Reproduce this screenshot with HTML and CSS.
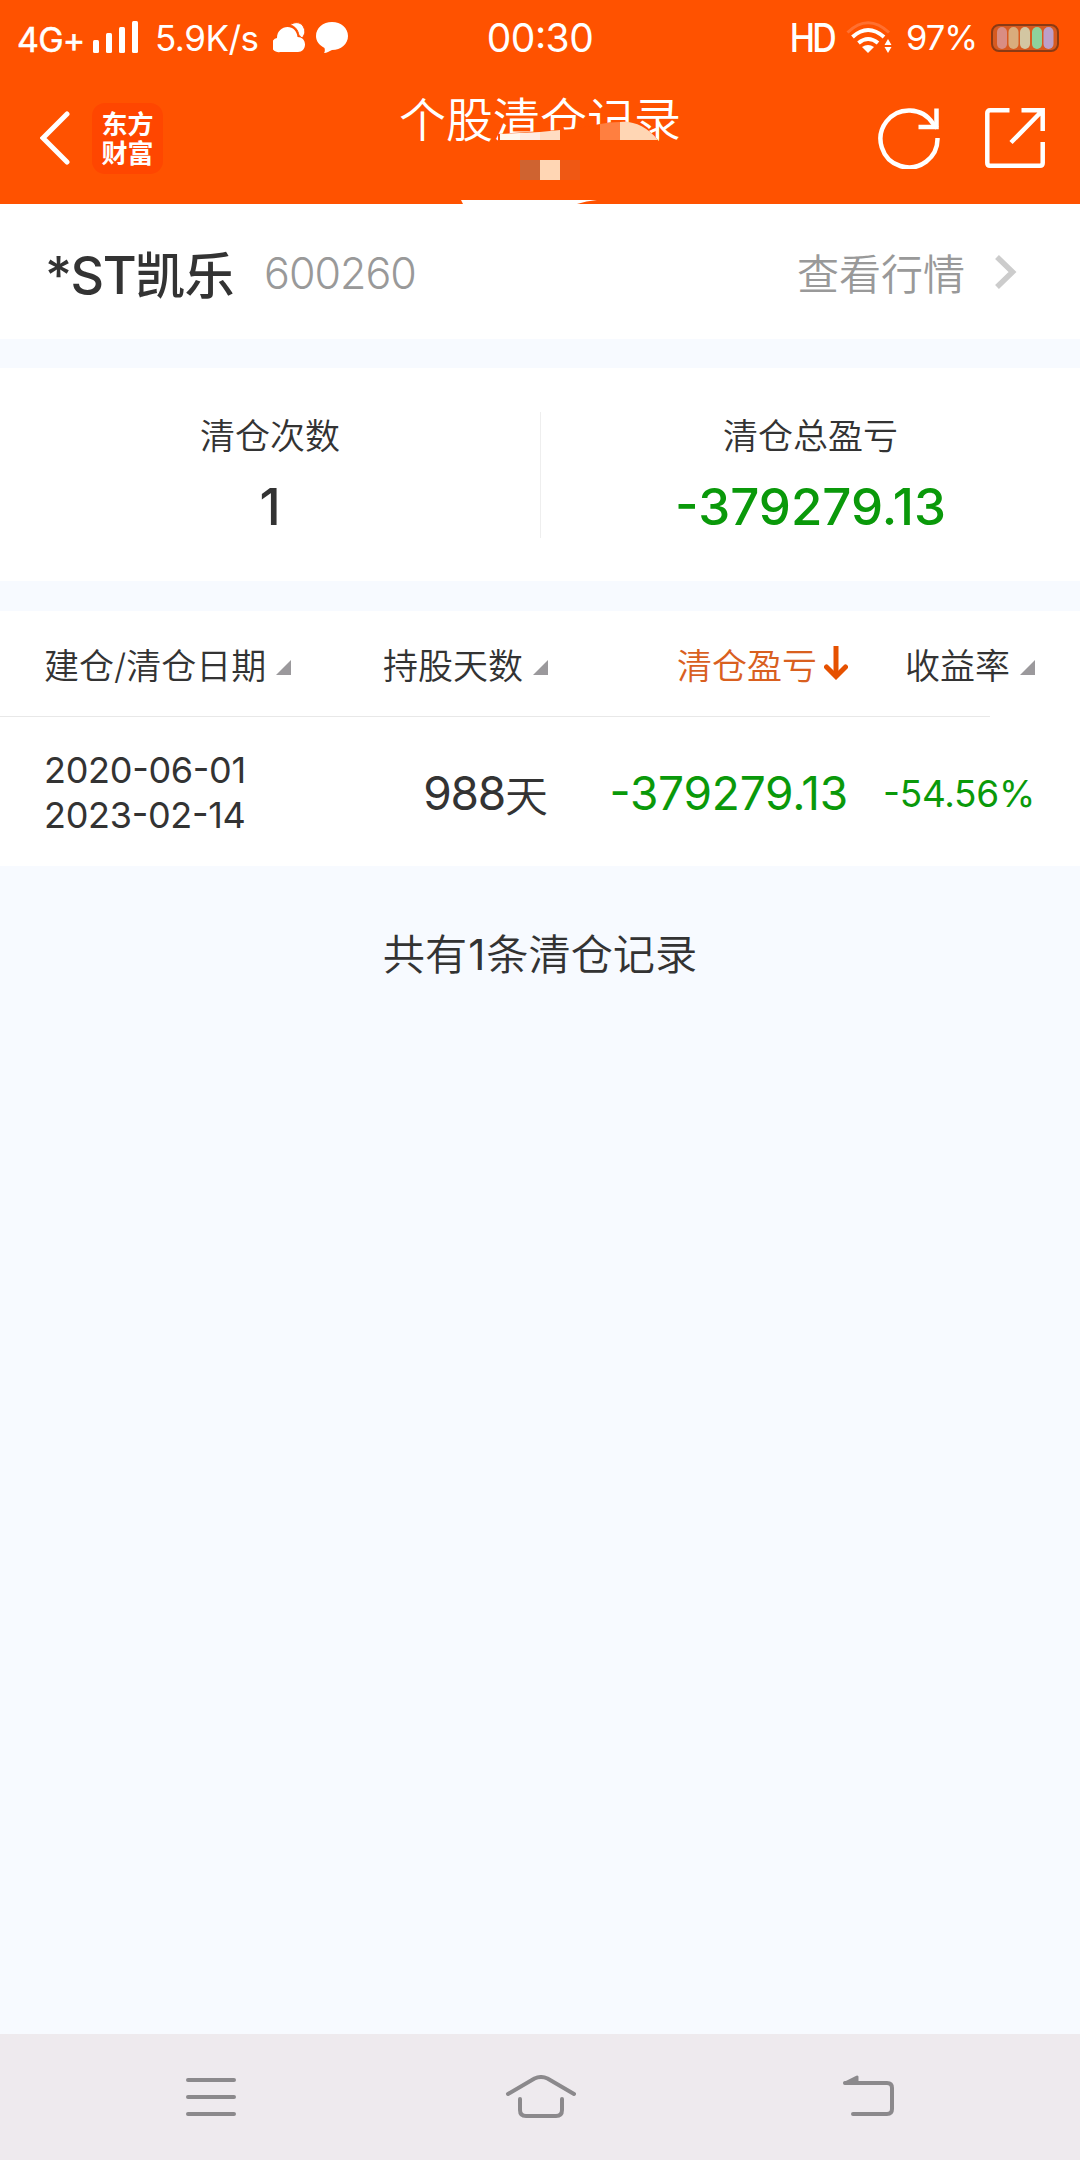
FILE: index.html
```html
<!DOCTYPE html>
<html lang="zh-CN">
    <head>
        <meta charset="utf-8">
        <title>个股清仓记录</title>
        <meta name="viewport" content="width=device-width, initial-scale=1">
        <link rel="stylesheet" href="styles.css">
    </head>
    <body>
        <header class="header">
            <div class="status-bar">
                <div class="status-left">
                    <span class="network">4G+</span>
                    <svg class="signal" width="46" height="34" viewBox="0 0 46 34" fill="#fff">
                        <rect x="0" y="19" width="6" height="13" rx="1.5"/>
                        <rect x="13" y="12" width="6" height="20" rx="1.5"/>
                        <rect x="26" y="6" width="6" height="26" rx="1.5"/>
                        <rect x="39" y="0" width="6" height="32" rx="1.5"/>
                    </svg>
                    <span class="speed">5.9K/s</span>
                    <svg class="cloud" width="32" height="31" viewBox="0 0 32 31" fill="#fff">
                        <path d="M7 30a7 7 0 0 1-3-14C4 9 9 5 14.500 5C20 5 24 9 24.500 15C29 15 32 18 32 22.500C32 27 29 30 25 30Z"/>
                        <path d="M17 3C22-1 29 0 31 6C33 10 31 14 29 16C28 14.500 27 14 26 13.500C25 8 22 4 17 3Z" stroke="#ff5200" stroke-width="1"/>
                    </svg>
                    <svg class="bubble" width="32" height="32" viewBox="0 0 32 32" fill="#fff">
                        <path d="M16 0C25 0 32 6 32 14S25 28 16 28C13 29 11 31 8 31C9 30 9 28 8.500 26C3 23 0 19 0 14C0 6 7 0 16 0Z"/>
                    </svg>
                </div>
                <div class="clock">00:30</div>
                <div class="status-right">
                    <span class="hd">HD</span>
                    <svg class="wifi" width="46" height="34" viewBox="0 0 46 34" fill="none" stroke="#fff" stroke-width="4">
                        <path d="M1.500 11.500Q22-8 43 11.500" stroke="#ff7030" stroke-width="3"/>
                        <path d="M6.500 16Q22 2 38 16"/>
                        <path d="M12.500 22Q22 14 32 22"/>
                        <path d="M16 26Q22 22 28 26L22 32Z" fill="#fff" stroke="none"/>
                        <path d="M42 18l3.500 6h-7zM42 32l3.500-6h-7z" fill="#fff" stroke="none"/>
                    </svg>
                    <span class="percent">97%</span>
                    <svg class="battery" width="68" height="28" viewBox="0 0 68 28">
                        <rect x="1" y="1" width="66" height="26" rx="7" fill="#d75a20" stroke="#8a3a14" stroke-width="2"/>
                        <rect x="6" y="3" width="10" height="22" rx="5" fill="#d98d83"/>
                        <rect x="17.500" y="3" width="10" height="22" rx="5" fill="#d9ac7c"/>
                        <rect x="29" y="3" width="10" height="22" rx="5" fill="#d3c6a2"/>
                        <rect x="41" y="3" width="10" height="22" rx="5" fill="#8ed19b"/>
                        <rect x="52.500" y="3" width="10" height="22" rx="5" fill="#bd9fc9"/>
                    </svg>
                </div>
            </div>
            <div class="title-bar">
                <div class="title-left">
                    <svg width="30" height="54" viewBox="0 0 30 54" fill="none" stroke="#fff" stroke-width="5" stroke-linecap="round">
                        <path d="M27 3L3 27L27 51"/>
                    </svg>
                    <div class="logo">东方<br>财富</div>
                </div>
                <h1 class="title">个股清仓记录</h1>
                <div class="title-right">
                    <svg width="62" height="62" viewBox="0 0 62 62" fill="none" stroke="#fff" stroke-width="4.500">
                        <path d="M59.500 31A28.500 28.500 0 1 1 55 16.500L59 21"/>
                        <path d="M58.500 1.500V20H40.500"/>
                    </svg>
                    <svg width="60" height="60" viewBox="0 0 60 60" fill="none" stroke="#fff" stroke-width="4.500">
                        <path d="M24.500 2.300H5Q2.300 2.300 2.300 5V55Q2.300 57.700 5 57.700H55Q57.700 57.700 57.700 55V34"/>
                        <path d="M36.500 2.300H57.700V23M57 3L26 34.500"/>
                    </svg>
                </div>
            </div>
            <svg class="smudge" width="360" height="84" viewBox="0 0 360 84">
                <path d="M138 14L214 9L240 4V24H138Z" fill="#ff5200"/>
                <path d="M240 4Q250 2 260 2Q281 0 298 20V24H240Z" fill="#ff5200"/>
                <path d="M140 14L160 13V20H140Z" fill="#fff8ee"/>
                <path d="M160 13L180 12V20H160Z" fill="#ffebe2"/>
                <path d="M180 12L200 10V20H180Z" fill="#ffdcc2"/>
                <path d="M240 4Q250 2 260 2V20H240Z" fill="#ff7f40"/>
                <path d="M260 2Q281 0 298 20H260Z" fill="#ffd6b4"/>
                <rect x="160" y="40" width="20" height="20" fill="#cf6330"/>
                <rect x="180" y="40" width="20" height="20" fill="#ffd6b4"/>
                <rect x="200" y="40" width="20" height="20" fill="#ef5814"/>
                <path d="M101 80H237Q226 81 217 84H103Z" fill="#fff"/>
            </svg>
        </header>

        <section class="stock">
            <span class="stock-name">*ST<b>凯乐</b></span>
            <span class="stock-code">600260</span>
            <span class="stock-link">查看行情</span>
            <svg width="22" height="34" viewBox="0 0 22 34" fill="none" stroke="#ccc" stroke-width="5.500">
                <path d="M2 2L17.500 17L2 32"/>
            </svg>
        </section>

        <section class="summary">
            <div class="summary-item">
                <div class="label">清仓次数</div>
                <div class="value">1</div>
            </div>
            <div class="summary-item">
                <div class="label">清仓总盈亏</div>
                <div class="value down">-379279.13</div>
            </div>
        </section>

        <section class="records">
            <div class="row head">
                <div class="cell first">建仓/清仓日期<i class="sort"></i></div>
                <div class="cell">持股天数<i class="sort"></i></div>
                <div class="cell active">清仓盈亏
                    <svg width="24" height="34" viewBox="0 0 24 34" fill="none" stroke="#e65100" stroke-width="5">
                        <path d="M12 0V30"/>
                        <path d="M2.500 21L12 30.500L21.500 21" stroke-linecap="round"/>
                    </svg>
                </div>
                <div class="cell">收益率<i class="sort"></i></div>
            </div>
            <div class="row body">
                <div class="cell first dates">2020-06-01<br>2023-02-14</div>
                <div class="cell days">988<span class="unit">天</span></div>
                <div class="cell profit down">-379279.13</div>
                <div class="cell rate down">-54.56%</div>
            </div>
        </section>

        <p class="total">共有<span class="count">1</span>条清仓记录</p>

        <nav class="nav-bar">
            <svg width="72" height="44" viewBox="0 0 72 44">
                <path d="M13 5H59M13 22H59M13 39H59"/>
            </svg>
            <svg width="72" height="44" viewBox="0 0 72 44">
                <path d="M4 19L30.500 3.500Q37 0.500 43.500 3.500L70 19M16 24V35Q16 41 22 41H52Q58 41 58 35V24"/>
            </svg>
            <svg width="72" height="44" viewBox="0 0 72 44">
                <path d="M12 8H54Q59 8 59 13V34Q59 39 54 39H20"/>
                <path d="M12 8L24 2V8Z" stroke-width="3" fill="#8b898c"/>
            </svg>
        </nav>
    </body>
</html>
```
FILE: styles.css
```css
* {
    box-sizing: border-box;
}

body {
    margin: 0;
    width: 1080px;
    height: 2160px;
    display: flex;
    flex-direction: column;
    background-color: #f7faff;
    color: #333;
    font-family: Inter, "Noto Sans CJK SC", sans-serif;
    font-size: 35px;
    font-weight: 350;
    overflow: hidden;
}

svg {
    display: block;
    flex: none;
}

/* header */
.header {
    position: relative;
    height: 204px;
    background-color: #ff5200;
    color: #fff;
}

.status-bar {
    height: 75px;
    display: grid;
    grid-template-columns: 1fr 110px 1fr;
    align-items: center;
    font-weight: 400;
    white-space: nowrap;
}

.status-left, .status-right {
    display: flex;
    align-items: center;
}

.status-left {
    padding-left: 17px;
}

.status-right {
    justify-content: flex-end;
    padding-right: 21px;
}

.network {
    width: 76px;
    padding-top: 3px;
    font-size: 34px;
    letter-spacing: -0.8px;
    -webkit-text-stroke: 0.5px #fff;
}

.speed {
    width: 118px;
    margin-left: 16px;
    font-size: 35px;
    letter-spacing: -0.5px;
}

.bubble {
    margin-left: 11px;
}

.clock {
    font-size: 39px;
    font-feature-settings: "case";
    text-align: center;
    letter-spacing: -0.5px;
}

.hd {
    font-size: 39px;
    font-weight: 500;
    letter-spacing: -3px;
    transform: scaleX(0.87);
    transform-origin: right;
}

.wifi {
    margin: 0 14px 0 12px;
}

.percent {
    width: 85px;
    font-size: 34.5px;
    letter-spacing: -1px;
}

.title-bar {
    height: 129px;
    padding: 0 35px 0 40px;
    display: grid;
    grid-template-columns: 1fr 290px 1fr;
}

.title-left, .title-right {
    height: 126px;
    display: flex;
    align-items: center;
}

.title-right {
    justify-content: flex-end;
    gap: 45px;
}

.logo {
    width: 71px;
    height: 71px;
    margin-left: 22px;
    padding-top: 7px;
    border-radius: 13px;
    background-color: #ff4600;
    font-size: 26px;
    font-weight: 700;
    line-height: 29px;
    text-align: center;
}

.title {
    margin: 10px 0 0 -5px;
    font-size: 47px;
    font-weight: 350;
    line-height: 70px;
    text-align: center;
    white-space: nowrap;
}

.smudge {
    position: absolute;
    left: 360px;
    top: 120px;
}

/* stock */
.stock {
    height: 135px;
    padding: 0 63px 0 45px;
    display: flex;
    align-items: center;
    background-color: #fff;
}

.stock-name {
    font-size: 52px;
    font-weight: 500;
    letter-spacing: -1.5px;
}

.stock-name b {
    font-size: 50px;
    font-weight: 500;
    letter-spacing: -0.5px;
}

.stock-code {
    margin-left: 30px;
    padding-top: 3px;
    font-size: 43px;
    font-weight: 300;
    color: #999;
    letter-spacing: -1px;
}

.stock-link {
    margin-left: auto;
    margin-right: 30px;
    font-size: 42px;
    color: #999;
}

/* summary */
.summary {
    height: 213px;
    margin-top: 29px;
    padding-top: 44px;
    display: grid;
    grid-template-columns: 1fr 1fr;
    align-items: start;
    background-color: #fff;
}

.summary-item {
    height: 126px;
    text-align: center;
}

.summary-item + .summary-item {
    border-left: 1px solid #eee;
}

.label {
    height: 48px;
    line-height: 48px;
}

.value {
    line-height: 94px;
    font-size: 51px;
    font-weight: 500;
    font-feature-settings: "case";
}

.down {
    color: #0a990a;
}

/* records */
.records {
    height: 255px;
    margin-top: 30px;
    background-color: #fff;
}

.row {
    display: grid;
    grid-template-columns: 248px 256px 300px 187px;
    padding: 0 45px 0 44px;
    white-space: nowrap;
}

.head {
    height: 106px;
    padding-bottom: 2px;
    background: linear-gradient(#e8e8e8, #e8e8e8) 0 100% / 990px 1px no-repeat;
}

.body {
    height: 149px;
    padding-top: 3px;
    font-weight: 400;
    font-feature-settings: "case";
}

.cell {
    display: flex;
    align-items: center;
    justify-content: flex-end;
}

.first {
    justify-content: flex-start;
}

.sort {
    margin: 8px 0 0 10px;
    border-left: 15px solid transparent;
    border-bottom: 15px solid #9b999c;
}

.active {
    color: #d9601f;
}

.active svg {
    margin-left: 7px;
}

.dates {
    font-size: 36px;
    line-height: 45px;
    letter-spacing: -0.3px;
}

.days, .profit {
    font-size: 46px;
    letter-spacing: -0.2px;
}

.days {
    letter-spacing: -1.2px;
}

.unit {
    font-size: 43px;
    font-weight: 350;
    letter-spacing: 0;
}

.rate {
    font-size: 37px;
    letter-spacing: -0.3px;
}

.total {
    margin: 56px 0 0;
    font-size: 42.2px;
    line-height: 66px;
    text-align: center;
}

.count {
    margin: 0 1px;
    font-weight: 400;
}

/* system navigation */
.nav-bar {
    height: 126px;
    margin-top: auto;
    padding: 0 175px;
    display: flex;
    align-items: center;
    justify-content: space-between;
    background-color: #eeeaee;
    fill: none;
    stroke: #8b898c;
    stroke-width: 4;
    stroke-linecap: round;
    stroke-linejoin: round;
}
```
